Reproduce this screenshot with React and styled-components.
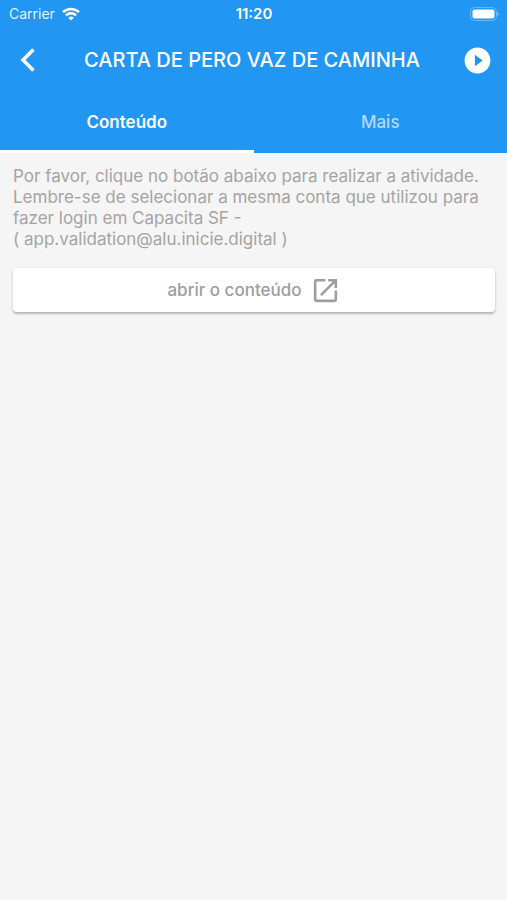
import React, { useState } from 'react'
import styled, { createGlobalStyle } from 'styled-components'
import { MdOpenInNew, MdPlayCircleFilled } from 'react-icons/md'

const GlobalStyle = createGlobalStyle`
  * {
    box-sizing: border-box;
  }

  body {
    margin: 0;
    background-color: #f5f5f5;
    font-family: Inter, "Liberation Sans", sans-serif;
  }

  button {
    border: none;
    font-family: inherit;
    cursor: pointer;
  }
`;

const Header = styled.header`
  background-color: #2196f3;
  color: white;
`;

const StatusBar = styled.div`
  display: grid;
  grid-template-columns: 1fr auto 1fr;
  align-items: center;
  height: 27px;
  padding: 0 8px 0 9px;
  font-size: 14px;
`;

const Carrier = styled.div`
  display: flex;
  align-items: center;
  gap: 7px;
  color: #e3f2fd;
`;

const Time = styled.time`
  font-size: 15px;
  font-weight: 600;
`;

const Battery = styled.svg`
  justify-self: end;
`;

const AppBar = styled.div`
  display: flex;
  align-items: center;
  justify-content: space-between;
  height: 66px;
  padding: 0 14px;
`;

const IconButton = styled.button`
  display: flex;
  padding: 0;
  background: none;
  color: white;
  font-size: 31px;
`;

const Title = styled.h1`
  margin: 0;
  font-size: 20px;
  font-weight: 500;
`;

const Tabs = styled.div`
  display: grid;
  grid-template-columns: 1fr 1fr;
`;

const Tab = styled.button`
  height: 60px;
  padding: 0;
  background: none;
  border-bottom: 3px solid ${({ $active }) => ($active ? 'white' : 'transparent')};
  color: ${({ $active }) => ($active ? 'white' : '#b3dbfb')};
  font-size: 17px;
  font-weight: ${({ $active }) => ($active ? 600 : 500)};
`;

const Content = styled.main`
  padding: 13px 12px 12px 13px;
`;

const Message = styled.p`
  margin: 0 0 18px;
  color: #a4a4a4;
  font-size: 17px;
  line-height: 21px;
`;

const OpenButton = styled.button`
  display: flex;
  align-items: center;
  justify-content: center;
  gap: 8px;
  width: 100%;
  height: 44px;
  padding: 0;
  border-radius: 4px;
  background-color: white;
  box-shadow: 0 2px 2px rgba(0, 0, 0, 0.22), 0 1px 4px rgba(0, 0, 0, 0.08);
  color: #9e9e9e;
  font-size: 17px;
  font-weight: 500;
`;

function BackIcon() {
  return (
    <svg width="28" height="28" viewBox="0 0 28 28" fill="none" stroke="white" strokeWidth="3.6" aria-hidden="true">
      <path d="M19.4 3.4 9.1 14l10.3 10.6" />
    </svg>
  )
}

function WifiIcon() {
  return (
    <svg width="18" height="14" viewBox="0 0 18 14" fill="none" stroke="white" strokeWidth="2.4" aria-hidden="true">
      <path d="M1 5.2a11.5 11.5 0 0 1 16 0" />
      <path d="M3.9 8.3a7.3 7.3 0 0 1 10.2 0" />
      <path d="M9 13.6 6.2 10.8a4 4 0 0 1 5.6 0z" fill="white" stroke="none" />
    </svg>
  )
}

function BatteryIcon() {
  return (
    <Battery width="29" height="14" viewBox="0 0 29 14" aria-hidden="true">
      <rect x="0.5" y="0.5" width="26" height="13" rx="4" fill="none" stroke="#6ab8f7" />
      <rect x="2.5" y="2.5" width="22" height="9" rx="2" fill="white" />
      <path d="M27.5 5v4c1.6-.6 1.6-3.4 0-4z" fill="#90caf9" />
    </Battery>
  )
}

export default function App() {
  const [tab, setTab] = useState('Conteúdo')

  return (
    <>
      <GlobalStyle />
      <Header>
        <StatusBar>
          <Carrier>Carrier <WifiIcon /></Carrier>
          <Time>11:20</Time>
          <BatteryIcon />
        </StatusBar>
        <AppBar>
          <IconButton aria-label="Voltar"><BackIcon /></IconButton>
          <Title>CARTA DE PERO VAZ DE CAMINHA</Title>
          <IconButton aria-label="Reproduzir"><MdPlayCircleFilled /></IconButton>
        </AppBar>
        <Tabs role="tablist">
          {['Conteúdo', 'Mais'].map((name) => (
            <Tab key={name} role="tab" aria-selected={tab === name} $active={tab === name} onClick={() => setTab(name)}>
              {name}
            </Tab>
          ))}
        </Tabs>
      </Header>
      <Content>
        <Message>
          Por favor, clique no botão abaixo para realizar a atividade. Lembre-se de selecionar a mesma conta que utilizou para fazer login em Capacita SF -
          <br />
          ( app.validation@alu.inicie.digital )
        </Message>
        <OpenButton>
          abrir o conteúdo <MdOpenInNew size={31} />
        </OpenButton>
      </Content>
    </>
  )
}
